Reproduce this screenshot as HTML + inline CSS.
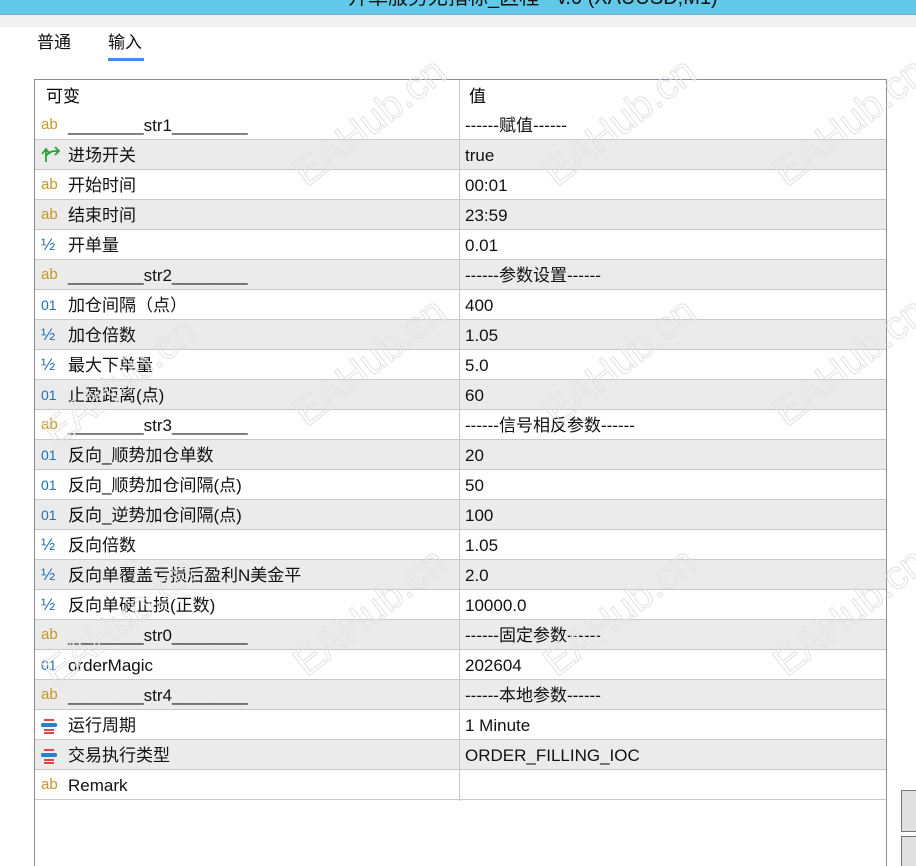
<!DOCTYPE html>
<html><head><meta charset="utf-8"><style>
html,body{margin:0;width:916px;height:866px;overflow:hidden}
body{background:#fff;font-family:"Liberation Sans","Noto Sans CJK SC",sans-serif}
#clip{position:relative;width:916px;height:866px;overflow:hidden}
.title{position:absolute;left:0;top:0;width:916px;height:14px;background:#62c8e8;border-bottom:1px solid #8aa6bd;overflow:hidden}
.title span{position:absolute;left:348px;top:-19px;font-size:20px;color:#111;white-space:nowrap}
.band{position:absolute;left:0;top:15px;width:916px;height:12px;background:#f0f0f0}
.tab{position:absolute;top:32px;font-size:17px;color:#111;line-height:22px}
.ul{position:absolute;left:108px;top:58px;width:36px;height:3px;background:#3c8ee8}
.tbl{position:absolute;left:34px;top:79px;width:851px;height:786px;border:1px solid #8d8d99;border-bottom:none;background:#fff;overflow:hidden}
.hdr{position:absolute;left:0;top:0;width:851px;height:30px;font-size:17px}
.hdr span{position:absolute;top:4px;line-height:26px}
.row{position:absolute;left:0;width:851px;height:29px;border-bottom:1px solid #c8c8c8;font-size:17px;color:#111}
.g{background:#ebebeb}
.lab,.val{position:absolute;top:1px;line-height:29px;white-space:nowrap}
.lab{left:33px}.val{left:430px}
.div{position:absolute;left:424px;top:0;width:1px;background:#c8c8c8}
.ic{position:absolute;left:6px;top:2px;font-size:15px;line-height:26px;width:22px}
.ab{color:#c8962a}
.n{color:#1f6fb5;font-size:14px}
.h{color:#1f6fb5;font-size:17px}
.wm{position:absolute;color:transparent;-webkit-text-stroke:1px #e2e2e2;font-size:40px;transform:rotate(-38deg);white-space:nowrap;font-family:"Liberation Sans",sans-serif}
</style></head><body><div id="clip">
<div class="title"><span>开单服务尤指标_区程 - v.0 (XAUUSD,M1)</span></div>
<div class="band"></div>
<div class="tab" style="left:37px">普通</div>
<div class="tab" style="left:108px">输入</div>
<div class="ul"></div>
<div class="tbl">
<div class="hdr"><span style="left:11px">可变</span><span style="left:434px">值</span></div>
<div class="div" style="height:30px"></div>
<div class="row" style="top:30px"><span class="ic ab">ab</span><span class="lab">________str1________</span><span class="val">------赋值------</span></div>
<div class="row g" style="top:60px"><span class="ic" style="top:4px"><svg width="22" height="20"><path d="M5 18V6M1 10l4-5 4 5M5 12c3-5 8-5 12-5M14 3l4 4-4 4" fill="none" stroke="#2aa23a" stroke-width="1.8"/></svg></span><span class="lab">进场开关</span><span class="val">true</span></div>
<div class="row" style="top:90px"><span class="ic ab">ab</span><span class="lab">开始时间</span><span class="val">00:01</span></div>
<div class="row g" style="top:120px"><span class="ic ab">ab</span><span class="lab">结束时间</span><span class="val">23:59</span></div>
<div class="row" style="top:150px"><span class="ic h">½</span><span class="lab">开单量</span><span class="val">0.01</span></div>
<div class="row g" style="top:180px"><span class="ic ab">ab</span><span class="lab">________str2________</span><span class="val">------参数设置------</span></div>
<div class="row" style="top:210px"><span class="ic n">01</span><span class="lab">加仓间隔（点）</span><span class="val">400</span></div>
<div class="row g" style="top:240px"><span class="ic h">½</span><span class="lab">加仓倍数</span><span class="val">1.05</span></div>
<div class="row" style="top:270px"><span class="ic h">½</span><span class="lab">最大下单量</span><span class="val">5.0</span></div>
<div class="row g" style="top:300px"><span class="ic n">01</span><span class="lab">止盈距离(点)</span><span class="val">60</span></div>
<div class="row" style="top:330px"><span class="ic ab">ab</span><span class="lab">________str3________</span><span class="val">------信号相反参数------</span></div>
<div class="row g" style="top:360px"><span class="ic n">01</span><span class="lab">反向_顺势加仓单数</span><span class="val">20</span></div>
<div class="row" style="top:390px"><span class="ic n">01</span><span class="lab">反向_顺势加仓间隔(点)</span><span class="val">50</span></div>
<div class="row g" style="top:420px"><span class="ic n">01</span><span class="lab">反向_逆势加仓间隔(点)</span><span class="val">100</span></div>
<div class="row" style="top:450px"><span class="ic h">½</span><span class="lab">反向倍数</span><span class="val">1.05</span></div>
<div class="row g" style="top:480px"><span class="ic h">½</span><span class="lab">反向单覆盖亏损后盈利N美金平</span><span class="val">2.0</span></div>
<div class="row" style="top:510px"><span class="ic h">½</span><span class="lab">反向单硬止损(正数)</span><span class="val">10000.0</span></div>
<div class="row g" style="top:540px"><span class="ic ab">ab</span><span class="lab">________str0________</span><span class="val">------固定参数------</span></div>
<div class="row" style="top:570px"><span class="ic n">01</span><span class="lab">orderMagic</span><span class="val">202604</span></div>
<div class="row g" style="top:600px"><span class="ic ab">ab</span><span class="lab">________str4________</span><span class="val">------本地参数------</span></div>
<div class="row" style="top:630px"><span class="ic" style="top:7px"><svg width="16" height="16"><rect x="3" y="1" width="10" height="2" fill="#e04848"/><rect x="0" y="5" width="16" height="4" rx="1.5" fill="#2a7fc8"/><rect x="3" y="11" width="10" height="2" fill="#e04848"/><rect x="3" y="14" width="10" height="2" fill="#e04848"/></svg></span><span class="lab">运行周期</span><span class="val">1 Minute</span></div>
<div class="row g" style="top:660px"><span class="ic" style="top:7px"><svg width="16" height="16"><rect x="3" y="1" width="10" height="2" fill="#e04848"/><rect x="0" y="5" width="16" height="4" rx="1.5" fill="#2a7fc8"/><rect x="3" y="11" width="10" height="2" fill="#e04848"/><rect x="3" y="14" width="10" height="2" fill="#e04848"/></svg></span><span class="lab">交易执行类型</span><span class="val">ORDER_FILLING_IOC</span></div>
<div class="row" style="top:690px"><span class="ic ab">ab</span><span class="lab">Remark</span><span class="val"></span></div>
<div class="div" style="top:30px;height:691px"></div>
</div>
<div style="position:absolute;left:901px;top:790px;width:14px;height:40px;background:#e0e0e0;border:1px solid #777"></div>
<div style="position:absolute;left:901px;top:836px;width:14px;height:29px;background:#e0e0e0;border:1px solid #777;border-bottom:none"></div>
<div class="wm" style="left:280px;top:100px">EAHub.cn</div>
<div class="wm" style="left:530px;top:100px">EAHub.cn</div>
<div class="wm" style="left:760px;top:100px">EAHub.cn</div>
<div class="wm" style="left:30px;top:360px">EAHub.cn</div>
<div class="wm" style="left:280px;top:340px">EAHub.cn</div>
<div class="wm" style="left:530px;top:340px">EAHub.cn</div>
<div class="wm" style="left:760px;top:340px">EAHub.cn</div>
<div class="wm" style="left:30px;top:600px">EAHub.cn</div>
<div class="wm" style="left:280px;top:590px">EAHub.cn</div>
<div class="wm" style="left:530px;top:590px">EAHub.cn</div>
<div class="wm" style="left:760px;top:590px">EAHub.cn</div>
</div></body></html>
